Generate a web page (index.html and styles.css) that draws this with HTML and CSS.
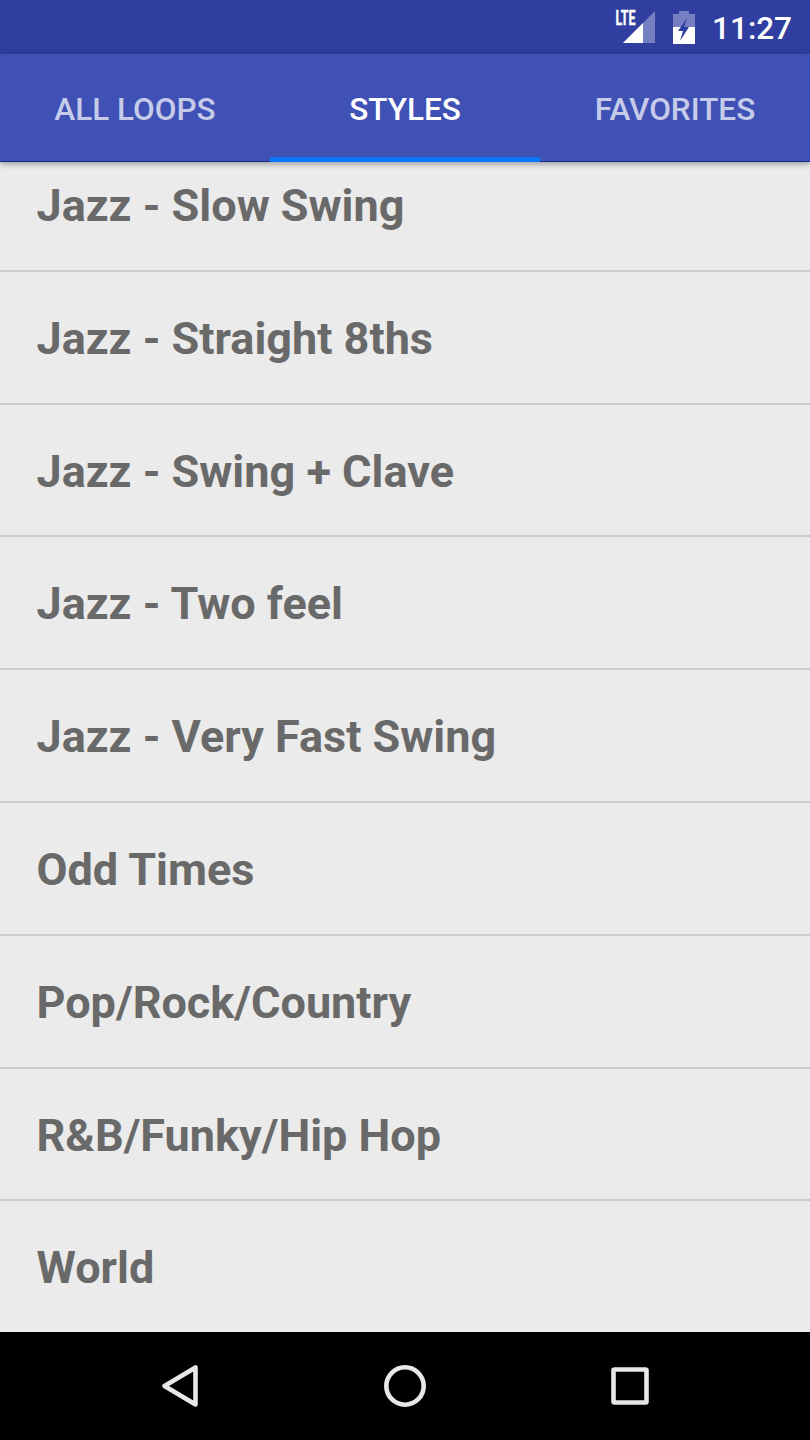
FILE: index.html
```html
<!DOCTYPE html>
<html lang="en">
<head>
    <meta charset="UTF-8">
    <meta name="viewport" content="width=device-width, initial-scale=1.0">
    <title>Loops</title>
    <link rel="stylesheet" href="styles.css">
</head>
<body>
    <div class="status-bar">
        <svg class="signal" width="42" height="36" viewBox="0 0 42 36">
            <path d="M41 2V34H9z" fill="#7580c3"/>
            <path d="M29 14V34H9z" fill="#fff"/>
            <text x="1.5" y="16" textLength="20" lengthAdjust="spacingAndGlyphs">LTE</text>
        </svg>
        <svg class="battery" width="22" height="34" viewBox="0 0 22 34">
            <path d="M6 1H16V4H22V17H0V4H6z" fill="#7580c3"/>
            <path d="M0 17H22V34H0z" fill="#fff"/>
            <path d="M14 8L5 21H10L7 31L16 17H11z" fill="#303f9f"/>
        </svg>
        <span class="clock">11:27</span>
    </div>

    <div class="tabs">
        <div class="tab">ALL LOOPS</div>
        <div class="tab active">STYLES</div>
        <div class="tab">FAVORITES</div>
    </div>

    <div class="list">
        <div class="item">Jazz - Slow Swing</div>
        <div class="item">Jazz - Straight 8ths</div>
        <div class="item">Jazz - Swing + Clave</div>
        <div class="item">Jazz - Two feel</div>
        <div class="item">Jazz - Very Fast Swing</div>
        <div class="item">Odd Times</div>
        <div class="item">Pop/Rock/Country</div>
        <div class="item">R&amp;B/Funky/Hip Hop</div>
        <div class="item">World</div>
    </div>

    <div class="nav-bar">
        <svg width="44" height="44" viewBox="0 0 44 44"><path d="M37.500 3.500V40.500L6.500 22z"/></svg>
        <svg width="44" height="44" viewBox="0 0 44 44"><circle cx="22" cy="22" r="18.700"/></svg>
        <svg width="44" height="44" viewBox="0 0 44 44"><rect x="5.500" y="5.500" width="33" height="33" rx="1"/></svg>
    </div>
</body>
</html>
```
FILE: styles.css
```css
* { box-sizing: border-box; }
body { margin: 0; width: 810px; height: 1440px; overflow: hidden; display: flex; flex-direction: column; background: #ebebeb; font-family: Roboto, sans-serif; }
.status-bar { height: 54px; flex: none; display: flex; align-items: center; justify-content: flex-end; padding-right: 18px; background: #303f9f; color: #fff; }
.signal { margin-right: 17px; overflow: visible; }
.signal text { font-size: 19.5px; font-weight: bold; fill: #fff; stroke: #fff; stroke-width: 0.4; }
.battery { margin-right: 17px; }
.clock { font-size: 31.5px; font-weight: 500; padding-top: 2px; }
.tabs { height: 108px; flex: none; display: flex; background: #3f51b5; border-bottom: 1px solid #1a2c93; box-shadow: 0 2px 6px rgba(0, 0, 0, 0.35); z-index: 1; }
.tab { flex: 1; line-height: 112px; text-align: center; font-size: 31.5px; font-weight: 500; color: #c5cbe9; }
.tab.active { height: 108px; color: #fff; border-bottom: 5px solid #0878f8; }
.list { flex: 1; overflow: hidden; display: flex; flex-direction: column; justify-content: flex-end; }
.item { height: 132.8px; flex: none; padding-left: 36.5px; line-height: 134px; font-size: 45px; font-weight: bold; color: #696969; border-bottom: 2px solid #cbcbcb; }
.item:last-child { height: 130.7px; border-bottom: none; }
.nav-bar { height: 108px; flex: none; display: flex; justify-content: center; align-items: center; gap: 181px; background: #000; }
.nav-bar svg { fill: none; stroke: #e8e8e8; stroke-width: 4.6; stroke-linejoin: round; }
```
